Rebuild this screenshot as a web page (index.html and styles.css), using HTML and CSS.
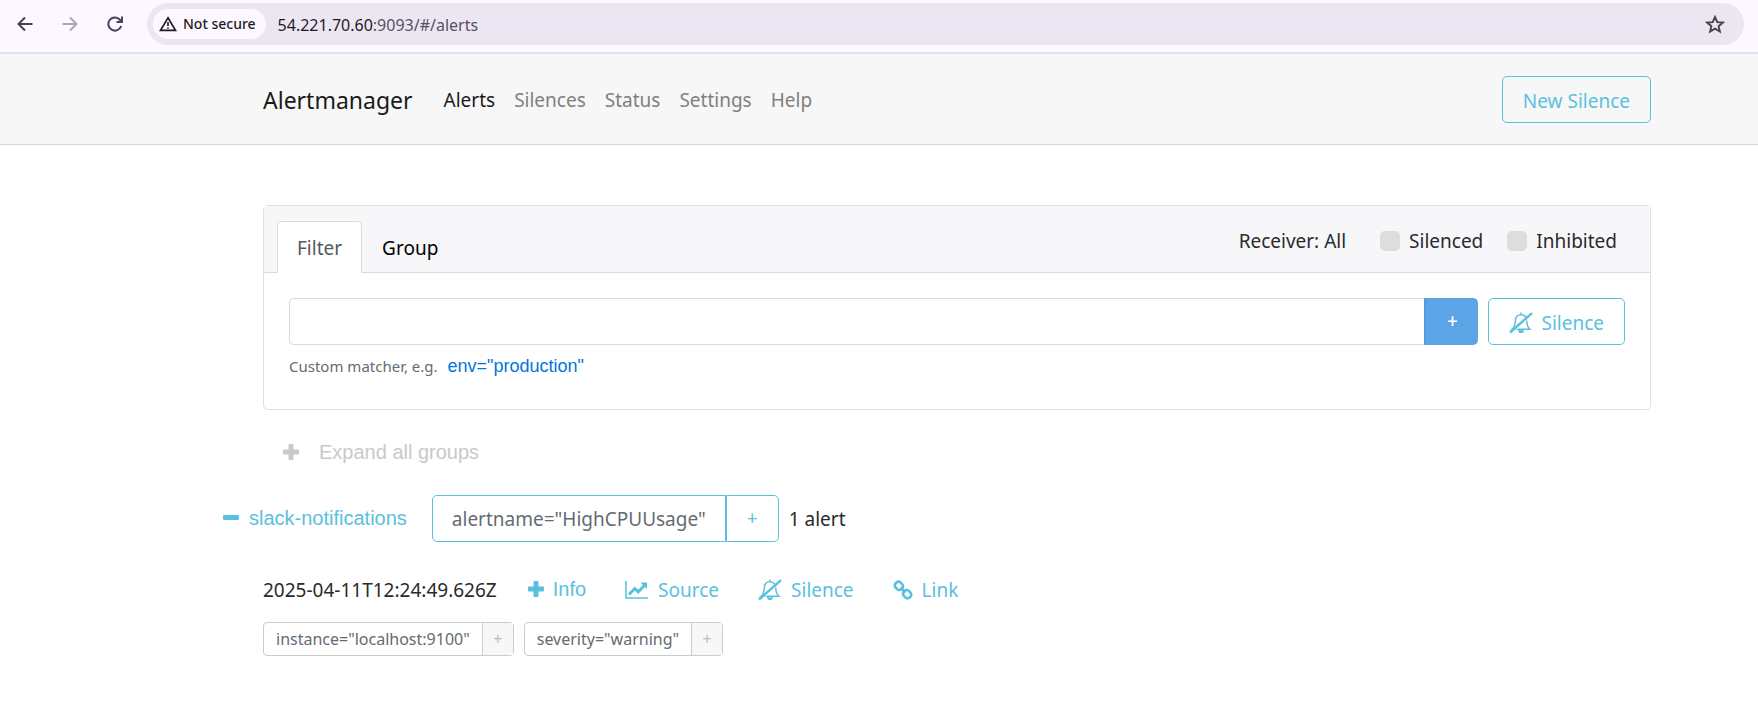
FILE: index.html
```html
<!DOCTYPE html>
<html lang="en">
<head>
<meta charset="utf-8">
<title>Alertmanager</title>
<link rel="stylesheet" href="styles.css">
</head>
<body>
<svg class="sprite" aria-hidden="true">
  <symbol id="bell-off" viewBox="0 0 24 22">
    <path d="M12 .5v2M3 17.300C5.800 15 6.200 12 6.400 8.500C6.600 4.500 8.800 2.700 12 2.700C15.200 2.700 17.400 4.500 17.600 8.500C17.800 12 18.200 15 21 17.300Z" fill="none" stroke="currentColor" stroke-width="1.500"/>
    <path d="M9 18.300h6a3 2.800 0 0 1-6 0Z" fill="currentColor"/>
    <path d="M2 22L24 2.500" fill="none" stroke="#fff" stroke-width="1"/>
    <path d="M1 20.500L23 1.200" fill="none" stroke="currentColor" stroke-width="2.400"/>
  </symbol>
  <symbol id="plus" viewBox="0 0 16 16">
    <path d="M6.500 0h3q1 0 1 1v4.500H15q1 0 1 1v3q0 1-1 1h-4.500V15q0 1-1 1h-3q-1 0-1-1v-4.500H1q-1 0-1-1v-3q0-1 1-1h4.500V1q0-1 1-1Z" fill="currentColor"/>
  </symbol>
</svg>

<header class="browser">
  <button class="tool" aria-label="Back"><svg width="16" height="16" viewBox="0 0 16 16"><path d="M15.500 8H2M8 1.500L1.500 8L8 14.500" fill="none" stroke="currentColor" stroke-width="2"/></svg></button>
  <button class="tool tool-off" aria-label="Forward"><svg width="16" height="16" viewBox="0 0 16 16"><path d="M.5 8H14M8 1.500L14.500 8L8 14.500" fill="none" stroke="currentColor" stroke-width="2"/></svg></button>
  <button class="tool" aria-label="Reload"><svg width="16" height="16" viewBox="0 0 16 16"><path d="M14.200 10A6.600 6.600 0 1 1 13.300 4.200L14.500 5.500" fill="none" stroke="currentColor" stroke-width="2"/><path d="M15 .5V6H9.500" fill="none" stroke="currentColor" stroke-width="2"/></svg></button>
  <div class="address">
    <button class="security"><svg width="18" height="16" viewBox="0 0 18 16"><path d="M9 1.800L16.500 14.300H1.500Z" fill="none" stroke="currentColor" stroke-width="1.700"/><path d="M9 6v4M9 11.200v1.600" stroke="currentColor" stroke-width="1.600"/></svg>Not secure</button>
    <span class="url">54.221.70.60<span class="url-rest">:9093/#/alerts</span></span>
    <button class="star" aria-label="Bookmark"><svg width="20" height="19" viewBox="0 0 20 19"><path d="M10 2L12.300 7.100L17.800 7.600L13.600 11.200L14.900 16.600L10 13.700L5.100 16.600L6.400 11.200L2.200 7.600L7.700 7.100Z" fill="none" stroke="currentColor" stroke-width="1.900"/></svg></button>
  </div>
</header>

<nav class="navbar">
  <a class="brand" href="#">Alertmanager</a>
  <a class="nav-link active" href="#">Alerts</a>
  <a class="nav-link" href="#">Silences</a>
  <a class="nav-link" href="#">Status</a>
  <a class="nav-link" href="#">Settings</a>
  <a class="nav-link" href="#">Help</a>
  <a class="btn new-silence" href="#">New Silence</a>
</nav>

<main class="page">
  <section class="card">
    <div class="card-header">
      <button class="tab tab-active">Filter</button>
      <button class="tab">Group</button>
      <div class="options">
        <button class="receiver">Receiver: All</button>
        <label class="check"><input type="checkbox">Silenced</label>
        <label class="check"><input type="checkbox">Inhibited</label>
      </div>
    </div>
    <div class="card-body">
      <div class="filter">
        <input class="matcher" type="text" aria-label="Matcher">
        <button class="add" aria-label="Add matcher">+</button>
        <button class="btn silence"><svg width="24" height="22"><use href="#bell-off"/></svg>Silence</button>
      </div>
      <div class="hint">Custom matcher, e.g. <button class="example">env="production"</button></div>
    </div>
  </section>

  <button class="expand"><svg width="16" height="16"><use href="#plus"/></svg>Expand all groups</button>

  <div class="group">
    <button class="group-name"><span class="minus"></span>slack-notifications</button>
    <div class="label-pair">
      <span class="label-text">alertname="HighCPUUsage"</span>
      <button class="label-add" aria-label="Filter by alertname">+</button>
    </div>
    <span>1 alert</span>
  </div>

  <article class="alert">
    <div class="alert-row">
      <time class="time">2025-04-11T12:24:49.626Z</time>
      <button class="action info"><svg width="16" height="16"><use href="#plus"/></svg>Info</button>
      <a class="action" href="#"><svg width="24" height="20" viewBox="0 0 24 20"><path d="M1 1v17h22" fill="none" stroke="currentColor" stroke-width="1.500"/><path d="M4 14.500L9.800 8.500L13.200 11.800L19.500 5.500" fill="none" stroke="currentColor" stroke-width="3"/><path d="M15.500 2.500H22V9Z" fill="currentColor"/></svg>Source</a>
      <a class="action" href="#"><svg width="24" height="22"><use href="#bell-off"/></svg>Silence</a>
      <a class="action" href="#"><svg width="20" height="20" viewBox="0 0 20 20"><g fill="none" stroke="currentColor" stroke-width="2.600"><rect x="1.800" y="2.300" width="8.200" height="7" rx="3" transform="rotate(45 5.900 5.800)"/><rect x="10" y="10.700" width="8.200" height="7" rx="3" transform="rotate(45 14.100 14.200)"/><path d="M7.500 7.500L12.500 12.500"/></g></svg>Link</a>
    </div>
    <div class="chips">
      <div class="chip"><span class="chip-text">instance="localhost:9100"</span><button class="chip-add" aria-label="Filter by instance">+</button></div>
      <div class="chip"><span class="chip-text">severity="warning"</span><button class="chip-add" aria-label="Filter by severity">+</button></div>
    </div>
  </article>
</main>
</body>
</html>
```
FILE: styles.css
```css
* { box-sizing: border-box; }

body {
  margin: 0;
  background: #fff;
  color: #292b2c;
  font-family: "Noto Sans", "Open Sans", sans-serif;
  font-size: 19px;
  line-height: 30px;
}

button, input { font: inherit; }
button { border: 0; padding: 0; background: none; color: inherit; white-space: nowrap; }
a { color: inherit; text-decoration: none; white-space: nowrap; }
svg { display: block; flex: none; }
.sprite { position: absolute; width: 0; height: 0; }

/* Browser toolbar */
.browser {
  display: flex;
  align-items: center;
  gap: 29px;
  padding: 3px 14px 7px 17px;
  background: #fcf8ff;
  border-bottom: 2px solid #e5dfee;
}
.tool { color: #47425a; }
.tool-off { color: #a9a6af; }
.address {
  flex: 1;
  display: flex;
  align-items: center;
  height: 42px;
  margin-left: -5px;
  padding: 0 19px 0 6px;
  border-radius: 21px;
  background: #ece6f3;
  font-size: 16px;
}
.security {
  display: flex;
  align-items: center;
  gap: 6px;
  height: 30px;
  padding: 0 10px 0 6px;
  border-radius: 15px;
  background: #fcf8ff;
  color: #1f1b26;
  font-size: 14px;
  font-weight: 500;
}
.url { margin-left: 12px; padding-top: 2px; color: #1f1b26; }
.url-rest { color: #56525d; }
.star { margin-left: auto; color: #46434c; }

/* Navigation */
.navbar {
  display: flex;
  align-items: center;
  gap: 19px;
  height: 91px;
  padding: 0 107px 0 263px;
  background: #f7f7f7;
  border-bottom: 1px solid #d5d5d5;
  color: #808080;
}
.brand { margin-right: 12px; padding-top: 2px; color: #1a1a1a; font-size: 23px; }
.nav-link { padding-top: 2px; }
.active { color: #1a1a1a; }
.btn {
  display: flex;
  align-items: center;
  justify-content: center;
  height: 47px;
  padding: 3px 20px 0;
  border: 1px solid #5bc0de;
  border-radius: 5px;
  color: #5bc0de;
}
.new-silence { margin-left: auto; }

.page { padding: 60px 107px 40px 263px; }

/* Filter card */
.card { border: 1px solid #dfdfe1; border-radius: 5px; }
.card-header {
  display: flex;
  align-items: flex-end;
  height: 67px;
  padding-left: 13px;
  background: #f7f7f9;
  border-bottom: 1px solid #d9dadc;
}
.tab {
  height: 52px;
  margin-bottom: -1px;
  padding: 2px 19px 0;
  border: 1px solid transparent;
  color: #000;
}
.tab-active {
  border-color: #d9dadc;
  border-bottom-color: #fff;
  border-radius: 5px 5px 0 0;
  background: #fff;
  color: #55595c;
}
.options {
  display: flex;
  align-items: center;
  gap: 24px;
  height: 62px;
  margin-left: auto;
  padding-right: 33px;
}
.receiver { margin-right: 10px; }
.check { display: flex; align-items: center; gap: 9px; }
.check input {
  appearance: none;
  width: 20px;
  height: 20px;
  margin: 0;
  border-radius: 5px;
  background: #ddd;
}
.card-body { padding: 25px 25px 28px; }
.filter { display: flex; }
.matcher {
  flex: 1;
  min-width: 0;
  height: 47px;
  padding: 0 15px;
  border: 1px solid #d9d9d9;
  border-right: 0;
  border-radius: 5px 0 0 5px;
}
.add {
  width: 54px;
  padding-bottom: 2px;
  border-left: 2px solid #4f9cdf;
  border-radius: 0 5px 5px 0;
  background: #5ba4e5;
  color: #fff;
  font-weight: 500;
}
.silence { gap: 8px; margin-left: 10px; }
.hint {
  display: flex;
  align-items: center;
  gap: 10px;
  margin-top: 6px;
  color: #636c72;
  font-size: 15px;
}
.example { color: #0275d8; font-family: "Liberation Sans", Arial, sans-serif; font-size: 18px; }

/* Alert groups */
.expand, .group-name, .info { font-family: "Liberation Sans", Arial, sans-serif; font-size: 20px; }
.expand {
  display: flex;
  align-items: center;
  gap: 20px;
  margin: 27px 0 0 20px;
  color: #c9c9c9;
}
.group {
  display: flex;
  align-items: center;
  gap: 10px;
  margin: 28px 0 0 -40px;
}
.group-name {
  display: flex;
  align-items: center;
  gap: 10px;
  margin-right: 15px;
  padding-bottom: 2px;
  color: #5bc0de;
}
.minus { width: 16px; height: 5px; border-radius: 1px; background: #5bc0de; }
.label-pair { display: flex; height: 47px; line-height: 45px; }
.label-text {
  padding: 1px 19px 0;
  border: 1px solid #5bc0de;
  border-radius: 5px 0 0 5px;
  color: #636c72;
}
.label-add {
  width: 53px;
  padding-bottom: 2px;
  border: 1px solid #5bc0de;
  border-radius: 0 5px 5px 0;
  color: #5bc0de;
}
.alert { margin-top: 32px; }
.alert-row { display: flex; align-items: center; }
.time { margin-right: 31px; }
.action { display: flex; align-items: center; gap: 9px; margin-right: 39px; color: #5bc0de; }
.info { padding-bottom: 2px; }
.chips { display: flex; gap: 10px; margin-top: 16px; font-size: 16px; line-height: 32px; }
.chip { display: flex; height: 34px; border: 1px solid #ccc; border-radius: 4px; color: #636c72; }
.chip-text { padding: 0 12px; }
.chip-add { width: 31px; border-left: 1px solid #ccc; background: #f7f7f7; color: #bbb; }
```
